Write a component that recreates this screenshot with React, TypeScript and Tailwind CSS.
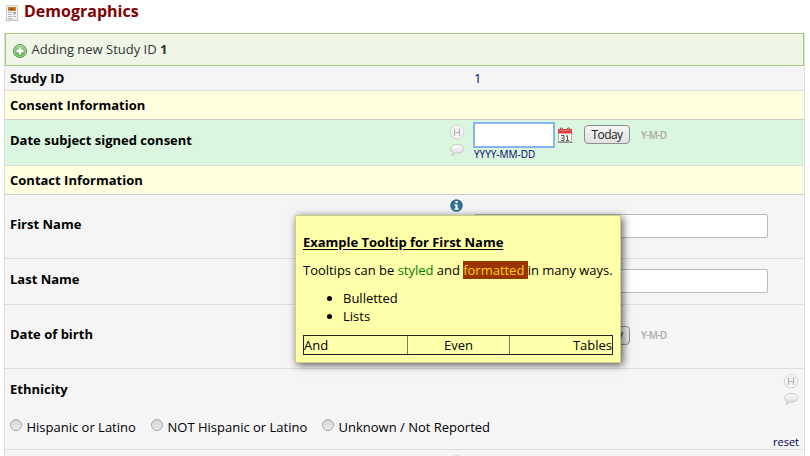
import React from "react";

function HistoryIcon() {
  return (
    <svg className="block" width="16" height="16" viewBox="0 0 16 16">
      <circle cx="8" cy="8.3" r="6.6" fill="#f3f3f3" stroke="#c4c4c4" />
      <circle cx="8" cy="8" r="5.9" fill="none" stroke="#fff" />
      <path d="M5.500 4.500v7.500M10.500 4.500v7.500M5.500 8.500h5" fill="none" stroke="#b5b5b5" strokeWidth="1.2" />
    </svg>
  );
}

function BalloonIcon() {
  return (
    <svg className="block" width="16" height="16" viewBox="0 0 16 16">
      <defs>
        <linearGradient id="balloon" x1="0" y1="0" x2="0" y2="1">
          <stop offset="0" stopColor="#fff" />
          <stop offset="1" stopColor="#d6d6dc" />
        </linearGradient>
      </defs>
      <path
        d="M8.300 2.500c3.700 0 6.500 1.700 6.500 4.200s-2.800 4.300-6.500 4.300c-.7 0-1.200 0-1.800-.1-.7 1.200-1.800 2.100-3.200 2.500.6-.9.800-1.900.5-3.100C2.300 9.500 1.700 8.100 1.700 6.700c0-2.500 2.900-4.200 6.600-4.200z"
        fill="url(#balloon)"
        stroke="#c2c2c2"
        strokeWidth=".9"
      />
    </svg>
  );
}

function FormIcon() {
  return (
    <svg className="block" width="16" height="17" viewBox="0 0 16 17">
      <path d="M1 15.500h14" stroke="#bdbdbd" />
      <path d="M2.500 .5h11v14.500h-11z" fill="#f6f6f6" stroke="#c9c9c9" />
      <path d="M4 2h8v4H4z" fill="#c07a2c" />
      <path d="M6 3h4v2H6z" fill="#a85c12" />
      <path d="M4 7.500h4M4 9.500h4M4 11.500h4M4 13.500h4M9 11.500h3" stroke="#b5b5b5" />
      <path d="M9 7.500h3M9 9h3" stroke="#999" />
    </svg>
  );
}

function AddIcon() {
  return (
    <svg className="block" width="16" height="16" viewBox="0 0 16 16">
      <defs>
        <linearGradient id="add" x1="0" y1="0" x2="0" y2="1">
          <stop offset="0" stopColor="#a3d392" />
          <stop offset="1" stopColor="#4ba044" />
        </linearGradient>
      </defs>
      <circle cx="8" cy="8" r="6.500" fill="url(#add)" stroke="#57984e" />
      <circle cx="8" cy="8" r="5.500" fill="none" stroke="#b9deae" strokeWidth=".8" />
      <path d="M8 4.500v7M4.500 8h7" stroke="#fff" strokeWidth="2.400" />
    </svg>
  );
}

function CalendarIcon() {
  return (
    <svg className="block" width="16" height="17" viewBox="0 0 16 17">
      <path d="M1.500 3.500h13v11h-13z" fill="#fbfbf8" stroke="#b1b5ad" />
      <path d="M1 2h14v4.500H1z" fill="#dc3f3f" />
      <path d="M2 3h12v1H2z" fill="#f07c78" />
      <path d="M.5 15.500h15" stroke="#8f9289" />
      <circle cx="4.500" cy="2" r="1.100" fill="#f3d0d0" stroke="#8c3434" strokeWidth=".9" />
      <circle cx="11.500" cy="2" r="1.100" fill="#f3d0d0" stroke="#8c3434" strokeWidth=".9" />
      <path d="M4 8.500h3v5H4M4.500 11h2.500M9 9.500l1.500-1v5M9 13.500h3" fill="none" stroke="#555d59" />
    </svg>
  );
}

function InfoIcon() {
  return (
    <svg className="block" width="13" height="13" viewBox="0 0 13 13">
      <circle cx="6.500" cy="6.500" r="6.300" fill="#31708f" />
      <path d="M5.400 2h2.200v2H5.400zM4.500 5.200h3.100v4.100h1v1.500H4.500V9.300h1V6.700h-1z" fill="#fff" />
    </svg>
  );
}

function SectionHeader({ children }: { children: React.ReactNode }) {
  return (
    <div className="flex h-[29px] items-center border-b border-[#ccc] bg-[#ffffe0] pl-[5px] font-bold">
      {children}
    </div>
  );
}

function RowTools() {
  return (
    <div className="-ml-px flex flex-col gap-[2px]">
      <HistoryIcon />
      <BalloonIcon />
    </div>
  );
}

function TodayButton() {
  return (
    <span className="flex h-[19px] w-[46px] items-center justify-center rounded-[4px] border border-[#8f8f8f] bg-linear-to-b from-[#f4f4f4] to-[#e2e2e2] text-[12px] tracking-[-0.6px] text-[#222]">
      Today
    </span>
  );
}

function FormatHint() {
  return <span className="ml-[11px] text-[10px] font-semibold tracking-[-0.7px] text-[#aaa]">Y-M-D</span>;
}

function Choice({ label, className }: { label: string; className: string }) {
  return (
    <label className={"flex whitespace-nowrap " + className}>
      <span className="mt-px mr-[4px] block size-3 rounded-full border border-[#a8a8a8] bg-linear-to-b from-[#d8d8d8] to-[#e8e8e8]" />
      <span className="pl-[0.5px]">{label}</span>
    </label>
  );
}

const row = "grid grid-cols-[445px_24px_1fr] border-b border-[#ddd]";
const label = "self-center pl-[5px] font-bold";
const raisedLabel = "self-center pl-[5px] pb-[5px] font-bold";

function Tooltip() {
  return (
    <div className="absolute top-[215px] left-[295px] h-[148px] w-[326px] border border-[#cccc88] bg-[#ffffaa] px-[7px] pt-[17px] shadow-[2px_2px_8px_rgba(0,0,0,0.65)]">
      <p className="font-bold tracking-[-0.03px] underline underline-offset-2">Example Tooltip for First Name</p>
      <p className="mt-[10px] tracking-[-0.02px] whitespace-nowrap">
        Tooltips can be <span className="text-[#008000]">styled</span> and{" "}
        <span className="bg-[#993300] text-[#ffcc00]">formatted </span>in many ways.
      </p>
      <ul className="mt-[10px] list-disc pl-10">
        <li>Bulletted</li>
        <li>Lists</li>
      </ul>
      <div className="mt-[10px] grid h-5 grid-cols-[104px_102px_102px] border border-[#222]">
        <span className="border-r border-[#777]">And</span>
        <span className="border-r border-[#777] text-center">Even</span>
        <span className="text-right">Tables</span>
      </div>
    </div>
  );
}

export default function App() {
  return (
    <div className="relative h-[456px] w-[810px] overflow-hidden bg-white font-['Open_Sans',sans-serif] text-[13px] leading-[18px] text-black">
      <h1 className="flex h-[33px] pl-1 text-[16px] leading-[22px] font-bold text-[#800000]">
        <span className="mt-[5px] mr-[4px]"><FormIcon /></span>
        Demographics
      </h1>
      <div className="ml-1 h-[430px] w-[801px] border-x border-[#ddd] bg-[#f5f5f5]">
        <div className="flex h-[33px] items-center border border-[#a5cc7a] bg-[#eff6e8] pl-[6px] text-[#333]">
          <span className="mt-[3px] mr-[3.500px]"><AddIcon /></span>
          <span className="-mt-px">Adding new Study ID <b className="font-bold">1</b></span>
        </div>
        <div className={row + " h-[25px]"}>
          <span className={label}>Study ID</span>
          <span />
          <span className="self-center text-[#000066]">1</span>
        </div>
        <SectionHeader>Consent Information</SectionHeader>
        <div className={row + " h-[46px] bg-[#daf6df]"}>
          <span className={raisedLabel}>Date subject signed consent</span>
          <div className="pt-1"><RowTools /></div>
          <div className="pt-[2px]">
            <div className="flex items-center">
              <span className="-ml-px h-[26px] w-[82px] border-2 border-[#8ab4f0] bg-white" />
              <span className="mr-[11px] ml-[2px]"><CalendarIcon /></span>
              <span className="-mt-px flex items-center">
                <TodayButton />
                <FormatHint />
              </span>
            </div>
            <div className="text-[10px] leading-[13px] text-[#000066]">YYYY-MM-DD</div>
          </div>
        </div>
        <SectionHeader>Contact Information</SectionHeader>
        <div className={row + " h-16"}>
          <span className={raisedLabel}>First Name</span>
          <div className="pt-[4px]"><InfoIcon /></div>
          <span className="mt-[19px] h-6 w-[294px] rounded-[2px] border border-[#bbb] bg-white" />
        </div>
        <div className={row + " h-[46px]"}>
          <span className={raisedLabel}>Last Name</span>
          <span />
          <span className="mt-[10px] h-6 w-[294px] rounded-[2px] border border-[#bbb] bg-white" />
        </div>
        <div className={row + " h-16"}>
          <span className={raisedLabel}>Date of birth</span>
          <span />
          <div className="flex items-center pb-[3px] pl-[110px]">
            <TodayButton />
            <FormatHint />
          </div>
        </div>
        <div className="flex h-[81px] justify-between border-b border-[#ddd]">
          <div className="pt-[11px] pl-[5px]">
            <div className="font-bold">Ethnicity</div>
            <div className="mt-[20px] flex">
              <Choice label="Hispanic or Latino" className="w-[141px]" />
              <Choice label="NOT Hispanic or Latino" className="w-[171px]" />
              <Choice label="Unknown / Not Reported" className="" />
            </div>
          </div>
          <div className="flex flex-col items-end justify-between pt-1 pr-[5px]">
            <RowTools />
            <span className="text-[11px] leading-[15px] text-[#000066]">reset</span>
          </div>
        </div>
        <div className="pt-1 pl-[444px]"><HistoryIcon /></div>
      </div>
      <Tooltip />
    </div>
  );
}
